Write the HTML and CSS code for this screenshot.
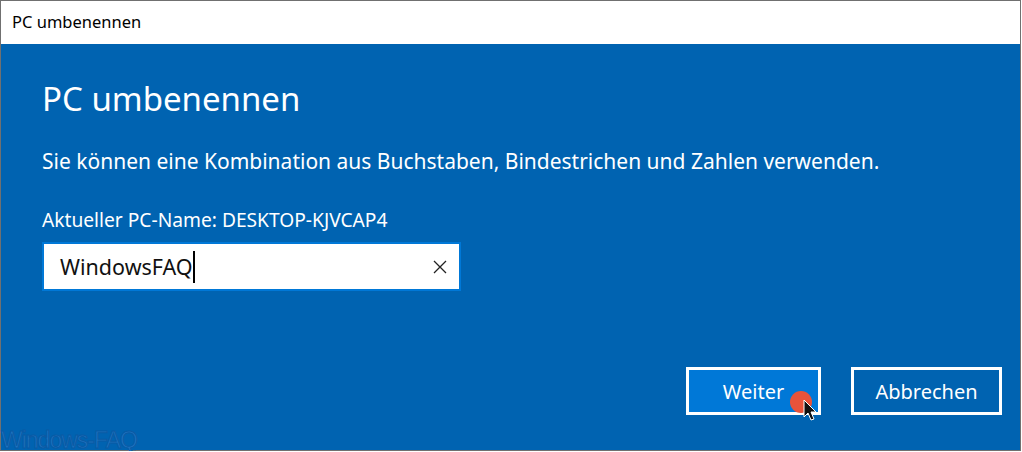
FILE: index.html
```html
<!DOCTYPE html>
<html lang="de">
<head>
  <meta charset="UTF-8" />
  <meta name="viewport" content="width=device-width, initial-scale=1.0"/>
  <title>PC umbenennen</title>
  <link rel="stylesheet" href="styles.css">
</head>
<body>

<div class="window">
  <div class="titlebar">PC umbenennen</div>

  <div class="content">
    <h1 class="heading">PC umbenennen</h1>
    <p class="hint">Sie können eine Kombination aus Buchstaben, Bindestrichen und Zahlen verwenden.</p>
    <p class="current">Aktueller PC-Name: DESKTOP-KJVCAP4</p>

    <div class="input">
      <span class="value">WindowsFAQ</span><span class="caret"></span>
      <svg class="clear" width="14" height="14" viewBox="0 0 14 14">
        <path d="M1 1 L13 13 M13 1 L1 13" stroke="#222" stroke-width="1.3" fill="none"/>
      </svg>
    </div>

    <div class="actions">
      <button class="btn primary">Weiter</button>
      <button class="btn">Abbrechen</button>
    </div>

    <!-- click marker and mouse pointer over the Weiter button -->
    <span class="click-dot"></span>
    <svg class="pointer" width="16" height="24" viewBox="0 0 16 24">
      <path d="M1 1 L1 18 L5 14 L8 21 L11 20 L8 13 L13 13 Z" fill="#111" stroke="#fff" stroke-width="1"/>
    </svg>

    <span class="watermark">Windows-FAQ</span>
  </div>
</div>

</body>
</html>
```

FILE: styles.css
```css
body {
  margin: 0;
  padding: 0;
  background: #fff;
  font-family: "Noto Sans", "Open Sans", sans-serif;
}

.window {
  width: 1021px;
  height: 451px;
  box-sizing: border-box;
  border: 1px solid #707070;
  display: flex;
  flex-direction: column;
}

.titlebar {
  height: 43px;
  line-height: 42px;
  padding-left: 11px;
  font-size: 16.5px;
  color: #000;
  background: #fff;
}

.content {
  flex: 1;
  position: relative;
  background: #0063b1;
  color: #fff;
  padding: 0 18px 0 41px;
  display: flex;
  flex-direction: column;
}

.heading {
  margin: 33px 0 0;
  font-size: 33px;
  font-weight: 400;
  line-height: 44px;
}

.hint {
  margin: 27px 0 0;
  font-size: 21px;
  line-height: 26px;
}

.current {
  margin: 33px 0 0;
  font-size: 19.2px;
  line-height: 26px;
}

.input {
  margin-top: 9px;
  width: 419px;
  height: 49px;
  flex-shrink: 0;
  box-sizing: border-box;
  border: 2px solid #0078d7;
  background: #fff;
  color: #111;
  display: flex;
  align-items: center;
  padding-left: 16px;
  font-size: 21.5px;
}

.caret {
  width: 2px;
  height: 32px;
  background: #000;
}

.clear {
  margin-left: auto;
  margin-right: 12px;
}

.actions {
  margin-top: auto;
  margin-bottom: 35px;
  display: flex;
  justify-content: flex-end;
  gap: 30px;
}

.btn {
  height: 48px;
  box-sizing: border-box;
  border: 3px solid #fff;
  background: #0063b1;
  color: #fff;
  font-family: inherit;
  font-size: 20px;
  padding: 0;
  width: 151px;
}

.btn.primary {
  width: 135px;
  background: #0078d7;
}

.click-dot {
  position: absolute;
  left: 789px;
  top: 347px;
  width: 22px;
  height: 22px;
  border-radius: 50%;
  background: #e8533a;
}

.pointer {
  position: absolute;
  left: 802px;
  top: 355px;
}

.watermark {
  position: absolute;
  left: 0;
  bottom: -4px;
  font-family: "Liberation Sans", sans-serif;
  font-size: 23px;
  color: #1d74c2;
  letter-spacing: -1px;
  -webkit-text-stroke: 1px #0a5aa4;
}
```
